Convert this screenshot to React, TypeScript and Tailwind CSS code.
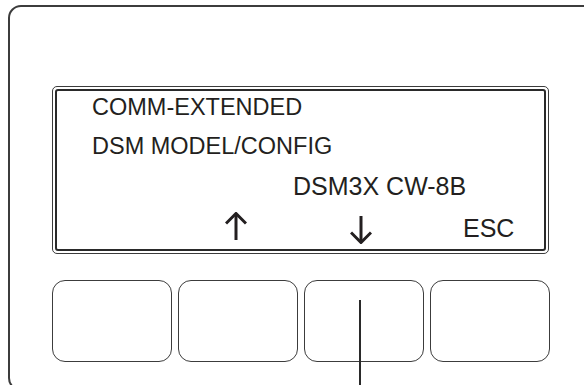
export default function App() {
  const buttons = [0, 1, 2, 3]

  return (
    <div className="relative w-[584px] h-[385px] overflow-hidden bg-white" style={{ fontFamily: '"Liberation Sans", Arial, sans-serif' }}>
      {/* outer panel */}
      <div className="ml-[8px] mt-[5px] w-[620px] h-[386px] border-2 border-[#3c3c3c] rounded-[13px] pl-[42px] pt-[79px]">
        {/* display */}
        <div className="w-[497px] h-[168px] border border-[#3c3c3c] rounded-[5px] p-[2px]">
          <div className="h-full border-2 border-[#2a2a2a] rounded-[3px] pl-[35px] text-[#231f20]">
            <div className="mt-[5px] text-[23.5px] leading-none">COMM-EXTENDED</div>
            <div className="mt-[15px] text-[23.5px] leading-none">DSM MODEL/CONFIG</div>
            <div className="mt-[16px] pl-[201px] text-[25px] leading-none">DSM3X CW-8B</div>
            <div className="mt-[17px] flex items-start">
              <svg className="ml-[133px] -mt-[4px]" width="22" height="28" viewBox="0 0 22 28" fill="none" stroke="#231f20" strokeWidth="3">
                <line x1="11" y1="2" x2="11" y2="28" />
                <polyline points="1,11.5 11,1.5 21,11.5" strokeLinejoin="miter" />
              </svg>
              <svg className="ml-[103px]" width="22" height="28" viewBox="0 0 22 28" fill="none" stroke="#231f20" strokeWidth="3">
                <line x1="11" y1="0" x2="11" y2="26" />
                <polyline points="1,16.5 11,26.5 21,16.5" strokeLinejoin="miter" />
              </svg>
              <div className="ml-[91px] text-[25px] leading-none">ESC</div>
            </div>
          </div>
        </div>

        {/* keys */}
        <div className="mt-[26px] flex gap-[6px]">
          {buttons.map((b) => (
            <div key={b} className="w-[120px] h-[82px] border-[1.5px] border-[#3c3c3c] rounded-[13px]" />
          ))}
        </div>
      </div>

      {/* leader line */}
      <div className="absolute left-[359px] top-[300px] w-[1.5px] h-[90px] bg-[#2a2a2a]" />
    </div>
  )
}
